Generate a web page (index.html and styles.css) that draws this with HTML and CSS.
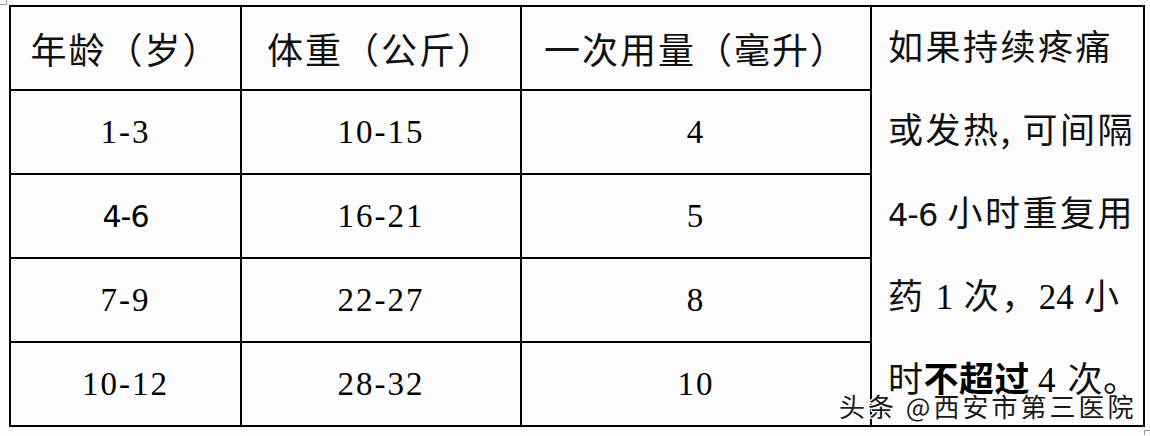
FILE: index.html
```html
<!DOCTYPE html>
<html lang="zh">
<head>
<meta charset="utf-8">
<link rel="stylesheet" href="styles.css">
</head>
<body>
<div class="page">
  <table class="dose">
    <colgroup>
      <col class="c1"><col class="c2"><col class="c3"><col class="c4">
    </colgroup>
    <tr>
      <td class="zh">年龄（岁）</td>
      <td class="zh">体重（公斤）</td>
      <td class="zh">一次用量（毫升）</td>
      <td class="note" rowspan="5"><div class="note-text">如果持续疼痛<br>或发热<span class="cm">,</span>可间隔<br><span class="sans">4-6</span> 小时重复用<br>药 <span class="num">1</span> 次，<span class="num">24</span> 小<br><span class="tight">时<b>不超过</b><span class="num sp">4</span>次。</span></div></td>
    </tr>
    <tr><td>1-3</td><td>10-15</td><td>4</td></tr>
    <tr><td><span class="sans">4-6</span></td><td>16-21</td><td>5</td></tr>
    <tr><td>7-9</td><td>22-27</td><td>8</td></tr>
    <tr><td>10-12</td><td>28-32</td><td>10</td></tr>
  </table>
  <span class="mark mark-tl"></span>
  <span class="mark mark-br"></span>
  <div class="watermark">头条 @西安市第三医院</div>
</div>
</body>
</html>
```

FILE: styles.css
```css
html, body {
  margin: 0;
  padding: 0;
  background: #fdfcfd;
}
.page {
  position: relative;
  width: 1150px;
  height: 436px;
  padding: 5px 0 0 9px;
  box-sizing: border-box;
}
.dose {
  border-collapse: separate;
  border-spacing: 0;
  table-layout: fixed;
  width: 1136px;
  border-top: 2px solid #000;
  border-left: 2px solid #000;
  font-family: "Liberation Serif", "Noto Sans CJK SC", serif;
  font-size: 33px;
  letter-spacing: 2px;
  color: #000;
}
.c1 { width: 231px; }
.c2 { width: 280px; }
.c3 { width: 350px; }
.c4 { width: 273px; }
.dose td {
  border-right: 2px solid #000;
  border-bottom: 2px solid #000;
  height: 82px;
  padding: 0;
  line-height: 40px;
  text-align: center;
  vertical-align: middle;
  box-sizing: content-box;
  overflow: hidden;
}
.dose td.zh {
  font-family: "Noto Sans CJK SC", sans-serif;
  font-size: 36px;
  letter-spacing: 2px;
  color: #111;
}
.sans {
  font-family: "DejaVu Sans", sans-serif;
  font-size: 30px;
  letter-spacing: -1px;
}
.dose td.note {
  vertical-align: top;
  text-align: left;
  padding: 0 0 0 16px;
  font-family: "Noto Sans CJK SC", sans-serif;
  font-size: 35px;
  line-height: 83px;
  letter-spacing: 2.5px;
  white-space: nowrap;
  color: #111;
}
.note-text {
  margin-top: -4px;
}
.note span, .note b {
  line-height: 1;
}
.note .num {
  font-family: "Liberation Serif", serif;
  font-size: 35px;
  letter-spacing: 0;
  color: #000;
}
.note .sans {
  font-size: 32px;
}
.note b {
  font-weight: 700;
  color: #000;
}
.tight {
  letter-spacing: 0.5px;
}
.note .sp {
  margin: 0 12px 0 8px;
}
.cm {
  display: inline-block;
  width: 22px;
}
.watermark {
  position: absolute;
  left: 839px;
  top: 391px;
  font-family: "Noto Sans CJK SC", sans-serif;
  font-size: 26px;
  line-height: 30px;
  letter-spacing: 3px;
  color: #1a1a1a;
  text-shadow: 1px 0 0 #fff, -1px 0 0 #fff, 0 1px 0 #fff, 0 -1px 0 #fff,
    1px 1px 0 #fff, -1px -1px 0 #fff, 1px -1px 0 #fff, -1px 1px 0 #fff;
  white-space: nowrap;
}
.mark {
  position: absolute;
  width: 6px;
  height: 4px;
}
.mark-tl {
  left: 0;
  top: 0;
  border-bottom: 1px solid #999;
  border-right: 1px solid #999;
}
.mark-br {
  left: 1144px;
  top: 430px;
  border-top: 1px solid #999;
  border-left: 1px solid #999;
}
```
